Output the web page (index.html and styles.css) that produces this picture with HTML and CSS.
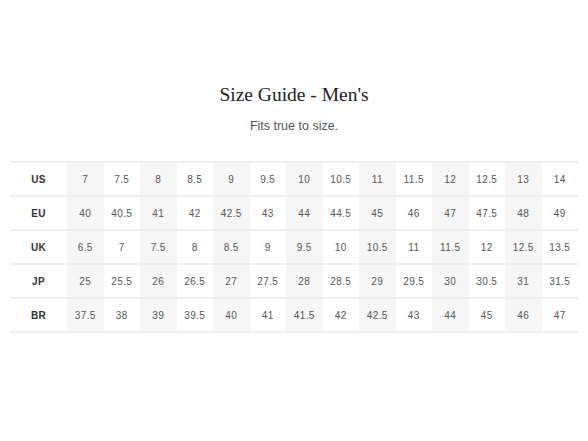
FILE: index.html
```html
<!DOCTYPE html>
<html>
<head>
<meta charset="utf-8">
<link rel="stylesheet" href="styles.css">
</head>
<body>
<div class="guide">
  <h1 class="title">Size Guide - Men's</h1>
  <p class="subtitle">Fits true to size.</p>
  <table class="sizes">
    <colgroup><col class="c-head"><col><col><col><col><col><col><col><col><col><col><col><col><col><col></colgroup>
    <tbody>
      <tr><th>US</th><td>7</td><td>7.5</td><td>8</td><td>8.5</td><td>9</td><td>9.5</td><td>10</td><td>10.5</td><td>11</td><td>11.5</td><td>12</td><td>12.5</td><td>13</td><td>14</td></tr>
      <tr><th>EU</th><td>40</td><td>40.5</td><td>41</td><td>42</td><td>42.5</td><td>43</td><td>44</td><td>44.5</td><td>45</td><td>46</td><td>47</td><td>47.5</td><td>48</td><td>49</td></tr>
      <tr><th>UK</th><td>6.5</td><td>7</td><td>7.5</td><td>8</td><td>8.5</td><td>9</td><td>9.5</td><td>10</td><td>10.5</td><td>11</td><td>11.5</td><td>12</td><td>12.5</td><td>13.5</td></tr>
      <tr><th>JP</th><td>25</td><td>25.5</td><td>26</td><td>26.5</td><td>27</td><td>27.5</td><td>28</td><td>28.5</td><td>29</td><td>29.5</td><td>30</td><td>30.5</td><td>31</td><td>31.5</td></tr>
      <tr><th>BR</th><td>37.5</td><td>38</td><td>39</td><td>39.5</td><td>40</td><td>41</td><td>41.5</td><td>42</td><td>42.5</td><td>43</td><td>44</td><td>45</td><td>46</td><td>47</td></tr>
    </tbody>
  </table>
</div>
</body>
</html>
```
FILE: styles.css
```css
html, body {
  margin: 0;
  padding: 0;
  background: #ffffff;
}
.guide {
  padding: 83px 10px 0 10px;
}
.title {
  margin: 0;
  font-family: "Liberation Serif", "DejaVu Serif", serif;
  font-weight: normal;
  font-size: 19.5px;
  line-height: 24px;
  color: #222222;
  text-align: center;
}
.subtitle {
  margin: 11px 0 0 0;
  font-family: "Liberation Sans", Arial, sans-serif;
  font-size: 12.5px;
  line-height: 16px;
  color: #555555;
  text-align: center;
}
.sizes {
  margin-top: 27px;
  width: 568px;
  border-collapse: collapse;
  table-layout: fixed;
  font-family: "Liberation Sans", Arial, sans-serif;
  font-size: 10px;
  letter-spacing: 0.4px;
}
.c-head {
  width: 57px;
}
.sizes tr {
  height: 34px;
  border-top: 2px solid #eeeeee;
}
.sizes tr:last-child {
  border-bottom: 2px solid #eeeeee;
}
.sizes th, .sizes td {
  padding: 0;
  text-align: center;
  vertical-align: middle;
}
.sizes th {
  font-weight: bold;
  color: #333333;
}
.sizes td {
  color: #555555;
}
.sizes td:nth-child(even) {
  background: #f6f6f6;
}
```
